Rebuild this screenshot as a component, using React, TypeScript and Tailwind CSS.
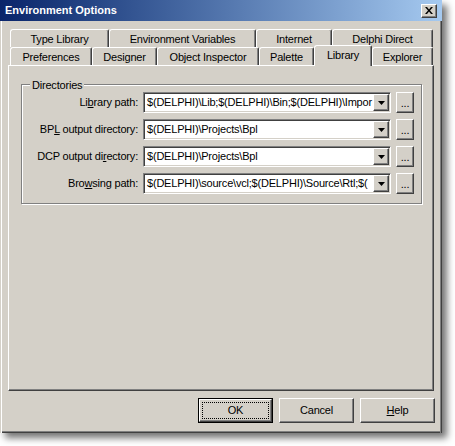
import React from 'react';

const FONT = "font-['Liberation_Sans',Arial,sans-serif]";

// raised 3D edge used by buttons and tabs
const RAISED =
  'border-t border-l border-t-white border-l-white border-r border-b border-r-[#404040] border-b-[#404040] shadow-[inset_-1px_-1px_0_#808080]';

const row1 = [
  { label: 'Type Library', w: 99 },
  { label: 'Environment Variables', w: 147 },
  { label: 'Internet', w: 76 },
  { label: 'Delphi Direct', w: 101 },
];

const row2 = [
  { label: 'Preferences', w: 82 },
  { label: 'Designer', w: 65 },
  { label: 'Object Inspector', w: 102 },
  { label: 'Palette', w: 55 },
  { label: 'Library', w: 58, active: true },
  { label: 'Explorer', w: 61 },
];

const dirs = [
  { pre: 'Li', key: 'b', post: 'rary path:', value: '$(DELPHI)\\Lib;$(DELPHI)\\Bin;$(DELPHI)\\Impor' },
  { pre: 'BP', key: 'L', post: ' output directory:', value: '$(DELPHI)\\Projects\\Bpl' },
  { pre: 'DCP output di', key: 'r', post: 'ectory:', value: '$(DELPHI)\\Projects\\Bpl' },
  { pre: 'Bro', key: 'w', post: 'sing path:', value: '$(DELPHI)\\source\\vcl;$(DELPHI)\\Source\\Rtl;$(' },
];

function Tab({ label, w, active }: { label: string; w: number; active?: boolean }) {
  if (active) {
    return (
      <div
        style={{ width: w }}
        className="relative z-10 -mb-px h-[21px] flex justify-center pt-[1px] bg-[#d4d0c8] border-t border-l border-t-white border-l-white border-r border-r-[#404040] shadow-[inset_-1px_0_0_#808080] rounded-tl-[3px] rounded-tr-[2px]"
      >
        {label}
      </div>
    );
  }
  return (
    <div
      style={{ width: w }}
      className="h-[18px] flex justify-center items-center pt-px bg-[#d4d0c8] border-t border-l border-t-white border-l-white border-r border-r-[#404040] shadow-[inset_-1px_0_0_#808080] rounded-tl-[3px] rounded-tr-[2px]"
    >
      {label}
    </div>
  );
}

function Combo({ value }: { value: string }) {
  return (
    <div className="w-[248px] h-[21px] flex bg-white border-t border-l border-t-[#808080] border-l-[#808080] border-r border-b border-r-white border-b-white shadow-[inset_1px_1px_0_#404040,inset_-1px_-1px_0_#d4d0c8]">
      <div className="flex-1 min-w-0 overflow-hidden whitespace-nowrap pl-[3px] pt-[3px] leading-[13px]">{value}</div>
      <div className={`w-[16px] h-[17px] shrink-0 mt-px mr-px bg-[#d4d0c8] flex items-center justify-center ${RAISED}`}>
        <svg width="7" height="4" viewBox="0 0 7 4">
          <path d="M0 0h7L3.5 4z" fill="#000" />
        </svg>
      </div>
    </div>
  );
}

function Button({ children, isDefault }: { children: React.ReactNode; isDefault?: boolean }) {
  if (isDefault) {
    return (
      <div className="w-[75px] h-[25px] border border-black">
        <div className={`w-full h-full flex items-center justify-center ${RAISED}`}>
          <div className="w-[67px] h-[17px] border border-dotted border-black flex items-center justify-center">
            {children}
          </div>
        </div>
      </div>
    );
  }
  return <div className={`w-[75px] h-[25px] flex items-center justify-center ${RAISED}`}>{children}</div>;
}

export default function App() {
  return (
    <div className={`w-[455px] h-[446px] bg-white text-[11px] tracking-[-0.2px] text-black ${FONT}`}>
      <div className="w-[442px] h-[433px] flex flex-col bg-[#d4d0c8] shadow-[5px_5px_7px_rgba(0,0,0,0.55)]">
        {/* caption */}
        <div className="h-[21px] flex items-center pl-[5px] pr-[5px] bg-gradient-to-r from-[#0a246a] to-[#a6caf0]">
          <span className="flex-1 text-white font-bold text-[11px] tracking-normal">Environment Options</span>
          <div className={`w-[16px] h-[14px] bg-[#d4d0c8] flex items-center justify-center ${RAISED}`}>
            <svg width="8" height="7" viewBox="0 0 8 7">
              <path d="M0 0h2l2 2.5L6 0h2L5 3.5 8 7H6L4 4.5 2 7H0l3-3.5z" fill="#000" />
            </svg>
          </div>
        </div>

        {/* client area with sunken window frame */}
        <div className="flex-1 flex flex-col px-2 pt-[8px] shadow-[inset_1px_0_0_#d4d0c8,inset_2px_0_0_#fff,inset_-1px_0_0_#404040,inset_-2px_0_0_#808080,inset_0_-1px_0_#404040,inset_0_-2px_0_#808080]">
          <div className="flex pl-[2px]">
            {row1.map((t) => (
              <Tab key={t.label} {...t} />
            ))}
          </div>
          <div className="flex items-end pl-[2px] h-[18px]">
            {row2.map((t) => (
              <Tab key={t.label} {...t} />
            ))}
          </div>

          <div className="flex-1 pt-[18px] pl-[12px] pr-[11px] border-t border-l border-t-white border-l-white border-r border-b border-r-[#404040] border-b-[#404040] shadow-[inset_-1px_-1px_0_#808080]">
            <div className="relative pt-[7px] pb-[9px] border border-[#808080] shadow-[inset_1px_1px_0_#fff,1px_1px_0_#fff]">
              <span className="absolute -top-[8px] left-[8px] px-[2px] bg-[#d4d0c8]">Directories</span>
              <div className="flex flex-col gap-[6px]">
                {dirs.map((d) => (
                  <div key={d.pre} className="flex items-center">
                    <div className="w-[116px] text-right whitespace-nowrap">
                      {d.pre}
                      <span className="underline">{d.key}</span>
                      {d.post}
                    </div>
                    <div className="ml-[5px]">
                      <Combo value={d.value} />
                    </div>
                    <div className={`ml-[5px] w-[18px] h-[21px] flex items-center justify-center pt-[2px] ${RAISED}`}>
                      ...
                    </div>
                  </div>
                ))}
              </div>
            </div>
          </div>

          <div className="flex justify-end gap-[6px] pt-[7px] pb-[10px] -mr-px">
            <Button isDefault>OK</Button>
            <Button>Cancel</Button>
            <Button>
              <span className="underline">H</span>elp
            </Button>
          </div>
        </div>
      </div>
    </div>
  );
}
